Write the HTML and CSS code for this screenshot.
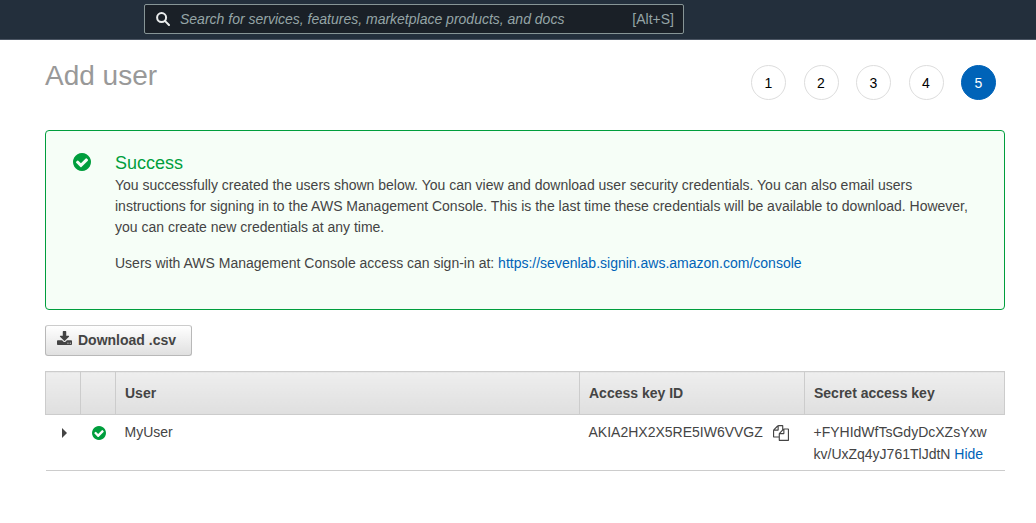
FILE: index.html
```html
<!DOCTYPE html>
<html lang="en">
<head>
<meta charset="utf-8">
<meta name="viewport" content="width=device-width, initial-scale=1">
<title>Add user</title>
<link rel="stylesheet" href="styles.css">
</head>
<body>
<svg class="sprite" aria-hidden="true">
  <symbol id="check-circle" viewBox="128 128 1536 1536"><path d="M1412 734q0-28-18-46l-91-90q-19-19-45-19t-45 19l-408 407-226-226q-19-19-45-19t-45 19l-91 90q-18 18-18 46 0 27 18 45l362 362q19 19 45 19 27 0 46-19l543-543q18-18 18-45zm252 162q0 209-103 385.5t-279.5 279.5-385.5 103-385.5-103-279.5-279.5-103-385.5 103-385.5 279.5-279.5 385.5-103 385.5 103 279.5 279.5 103 385.5z"/></symbol>
</svg>
<header class="topbar">
  <label class="search">
    <svg class="search-icon" viewBox="0 0 14 14" aria-hidden="true"><circle cx="5.6" cy="5.6" r="4.5"/><path d="M8.9 8.9L13 13"/></svg>
    <input class="search-input" type="search" aria-label="Search" placeholder="Search for services, features, marketplace products, and docs">
    <span class="search-hint">[Alt+S]</span>
  </label>
</header>
<main class="page">
  <div class="page-head">
    <h1 class="title">Add user</h1>
    <ol class="steps">
      <li class="step">1</li>
      <li class="step">2</li>
      <li class="step">3</li>
      <li class="step">4</li>
      <li class="step step-current" aria-current="step">5</li>
    </ol>
  </div>
  <section class="alert">
    <svg class="alert-icon" aria-hidden="true"><use href="#check-circle"/></svg>
    <div class="alert-body">
      <h2 class="alert-title">Success</h2>
      <p class="alert-text">You successfully created the users shown below. You can view and download user security credentials. You can also email users instructions for signing in to the AWS Management Console. This is the last time these credentials will be available to download. However, you can create new credentials at any time.</p>
      <p class="alert-text">Users with AWS Management Console access can sign-in at: <a class="link" href="https://sevenlab.signin.aws.amazon.com/console">https://sevenlab.signin.aws.amazon.com/console</a></p>
    </div>
  </section>
  <button class="download" type="button">
    <svg class="download-icon" viewBox="64 0 1664 1536" aria-hidden="true"><path d="M1344 1344q0-26-19-45t-45-19-45 19-19 45 19 45 45 19 45-19 19-45zm256 0q0-26-19-45t-45-19-45 19-19 45 19 45 45 19 45-19 19-45zm128-224v320q0 40-28 68t-68 28h-1472q-40 0-68-28t-28-68v-320q0-40 28-68t68-28h465l135 136q58 56 136 56t136-56l136-136h464q40 0 68 28t28 68zm-325-569q17 41-14 70l-448 448q-18 19-45 19t-45-19l-448-448q-31-29-14-70 17-39 59-39h256v-448q0-26 19-45t45-19h256q26 0 45 19t19 45v448h256q42 0 59 39z"/></svg>
    Download .csv
  </button>
  <table class="users">
    <colgroup>
      <col class="col-icon"><col class="col-icon"><col><col class="col-key"><col class="col-secret">
    </colgroup>
    <thead>
      <tr><th></th><th></th><th>User</th><th>Access key ID</th><th>Secret access key</th></tr>
    </thead>
    <tbody>
      <tr>
        <td class="cell-icon"><button class="icon-button" type="button" aria-label="Expand row"><svg class="caret" viewBox="0 0 5 10" aria-hidden="true"><path d="M0 0L5 5L0 10z"/></svg></button></td>
        <td class="cell-icon"><div class="status"><svg class="status-icon" role="img" aria-label="Created"><use href="#check-circle"/></svg></div></td>
        <td>MyUser</td>
        <td><div class="key"><span>AKIA2HX2X5RE5IW6VVGZ</span><button class="icon-button" type="button" aria-label="Copy access key ID"><svg class="copy-icon" viewBox="0 0 1792 1792" aria-hidden="true"><path d="M1696 384q40 0 68 28t28 68v1216q0 40-28 68t-68 28h-960q-40 0-68-28t-28-68v-288h-544q-40 0-68-28t-28-68v-672q0-40 20-88t48-76l408-408q28-28 76-48t88-20h416q40 0 68 28t28 68v328q68-40 128-40h416zm-544 213l-299 299h299v-299zm-640-384l-299 299h299v-299zm196 647l316-316v-416h-384v416q0 40-28 68t-68 28h-416v640h512v-256q0-40 20-88t48-76zm956 804v-1152h-384v416q0 40-28 68t-68 28h-416v640h896z"/></svg></button></div></td>
        <td class="cell-secret">+FYHIdWfTsGdyDcXZsYxwkv/UxZq4yJ761TlJdtN <a class="link" href="#">Hide</a></td>
      </tr>
    </tbody>
  </table>
</main>
</body>
</html>
```
FILE: styles.css
```css
* {
  box-sizing: border-box;
}

body {
  margin: 0;
  background: #fff;
  color: #444;
  font: 14px/21px "Liberation Sans", Arial, sans-serif;
}

.sprite {
  display: none;
}

.link {
  color: #0063b8;
  text-decoration: none;
}

.topbar {
  height: 40px;
  padding: 4px 16px 0 144px;
  background: #232f3c;
  border-bottom: 1px solid #4b5563;
}

.search {
  display: flex;
  align-items: center;
  gap: 10px;
  max-width: 540px;
  height: 30px;
  padding: 0 9px 0 11px;
  background: #1a2027;
  border: 1px solid #879596;
  border-radius: 2px;
  color: #95a5a6;
}

.search-icon {
  flex: none;
  width: 14px;
  height: 14px;
  fill: none;
  stroke: #eaeded;
  stroke-width: 2;
  stroke-linecap: round;
}

.search-input {
  flex: 1;
  min-width: 0;
  padding: 0;
  border: 0;
  outline: 0;
  background: none;
  color: #fff;
  font: inherit;
}

.search-input::placeholder {
  color: #95a5a6;
  font-style: italic;
  opacity: 1;
}

.page {
  padding: 20px 31px 32px 45px;
}

.page-head {
  display: flex;
  justify-content: space-between;
  align-items: flex-start;
  margin-bottom: 30px;
  padding-right: 9px;
}

.title {
  margin: 0;
  color: #999;
  font-size: 28px;
  font-weight: 400;
  line-height: 32px;
}

.steps {
  display: flex;
  justify-content: space-between;
  width: 245px;
  margin: 5px 0 0;
  padding: 0;
  list-style: none;
}

.step {
  width: 35px;
  height: 35px;
  border: 1px solid #ddd;
  border-radius: 50%;
  color: #000;
  line-height: 35px;
  text-align: center;
}

.step-current {
  background: #0063b8;
  border-color: #0063b8;
  color: #fff;
}

.alert {
  display: flex;
  gap: 24px;
  margin-bottom: 15px;
  padding: 20px 28px 20px 27px;
  background: #f6fef7;
  border: 1px solid #009e3d;
  border-radius: 4px;
}

.alert-icon {
  flex: none;
  width: 18px;
  height: 18px;
  margin-top: 2px;
  fill: #009e3d;
}

.alert-title {
  margin: 0;
  color: #009e3d;
  font-size: 18px;
  font-weight: 400;
  line-height: 24px;
}

.alert-text {
  margin: 0 0 15px;
}

.download {
  display: flex;
  align-items: center;
  gap: 6px;
  height: 31px;
  margin: 0 0 15px;
  padding: 0 15px 0 11px;
  background: linear-gradient(#fff, #e0e0e0);
  border: 1px solid #b8b8b8;
  border-top-color: #ccc;
  border-radius: 3px;
  color: #444;
  font: bold 14px/21px "Liberation Sans", Arial, sans-serif;
}

.download-icon {
  width: 15px;
  height: 14px;
  margin-bottom: 5px;
  fill: #444;
}

.users {
  width: 100%;
  border-collapse: collapse;
  table-layout: fixed;
}

.col-icon {
  width: 35px;
}

.col-key {
  width: 225px;
}

.col-secret {
  width: 200px;
}

.users th {
  height: 43px;
  padding: 0 9px;
  background: linear-gradient(#eee, #dfdfdf);
  border: 1px solid #ccc;
  text-align: left;
}

.users td {
  padding: 6px 9px 5px;
  border-bottom: 1px solid #ccc;
  line-height: 22px;
  overflow-wrap: anywhere;
  vertical-align: top;
}

.users .cell-icon {
  padding-right: 0;
  padding-left: 2px;
}

.users .cell-secret {
  padding-right: 16px;
}

.key {
  display: flex;
  align-items: flex-start;
  gap: 10px;
}

.icon-button {
  display: flex;
  height: 24px;
  align-items: center;
  padding: 0;
  border: 0;
  background: none;
}

.cell-icon .icon-button {
  width: 100%;
  justify-content: center;
}

.caret {
  width: 5px;
  height: 10px;
  fill: #444;
}

.status {
  display: flex;
  align-items: center;
  justify-content: center;
  height: 24px;
}

.status-icon {
  width: 14px;
  height: 14px;
  fill: #009e3d;
}

.copy-icon {
  width: 16px;
  height: 16px;
  fill: #444;
}
```
